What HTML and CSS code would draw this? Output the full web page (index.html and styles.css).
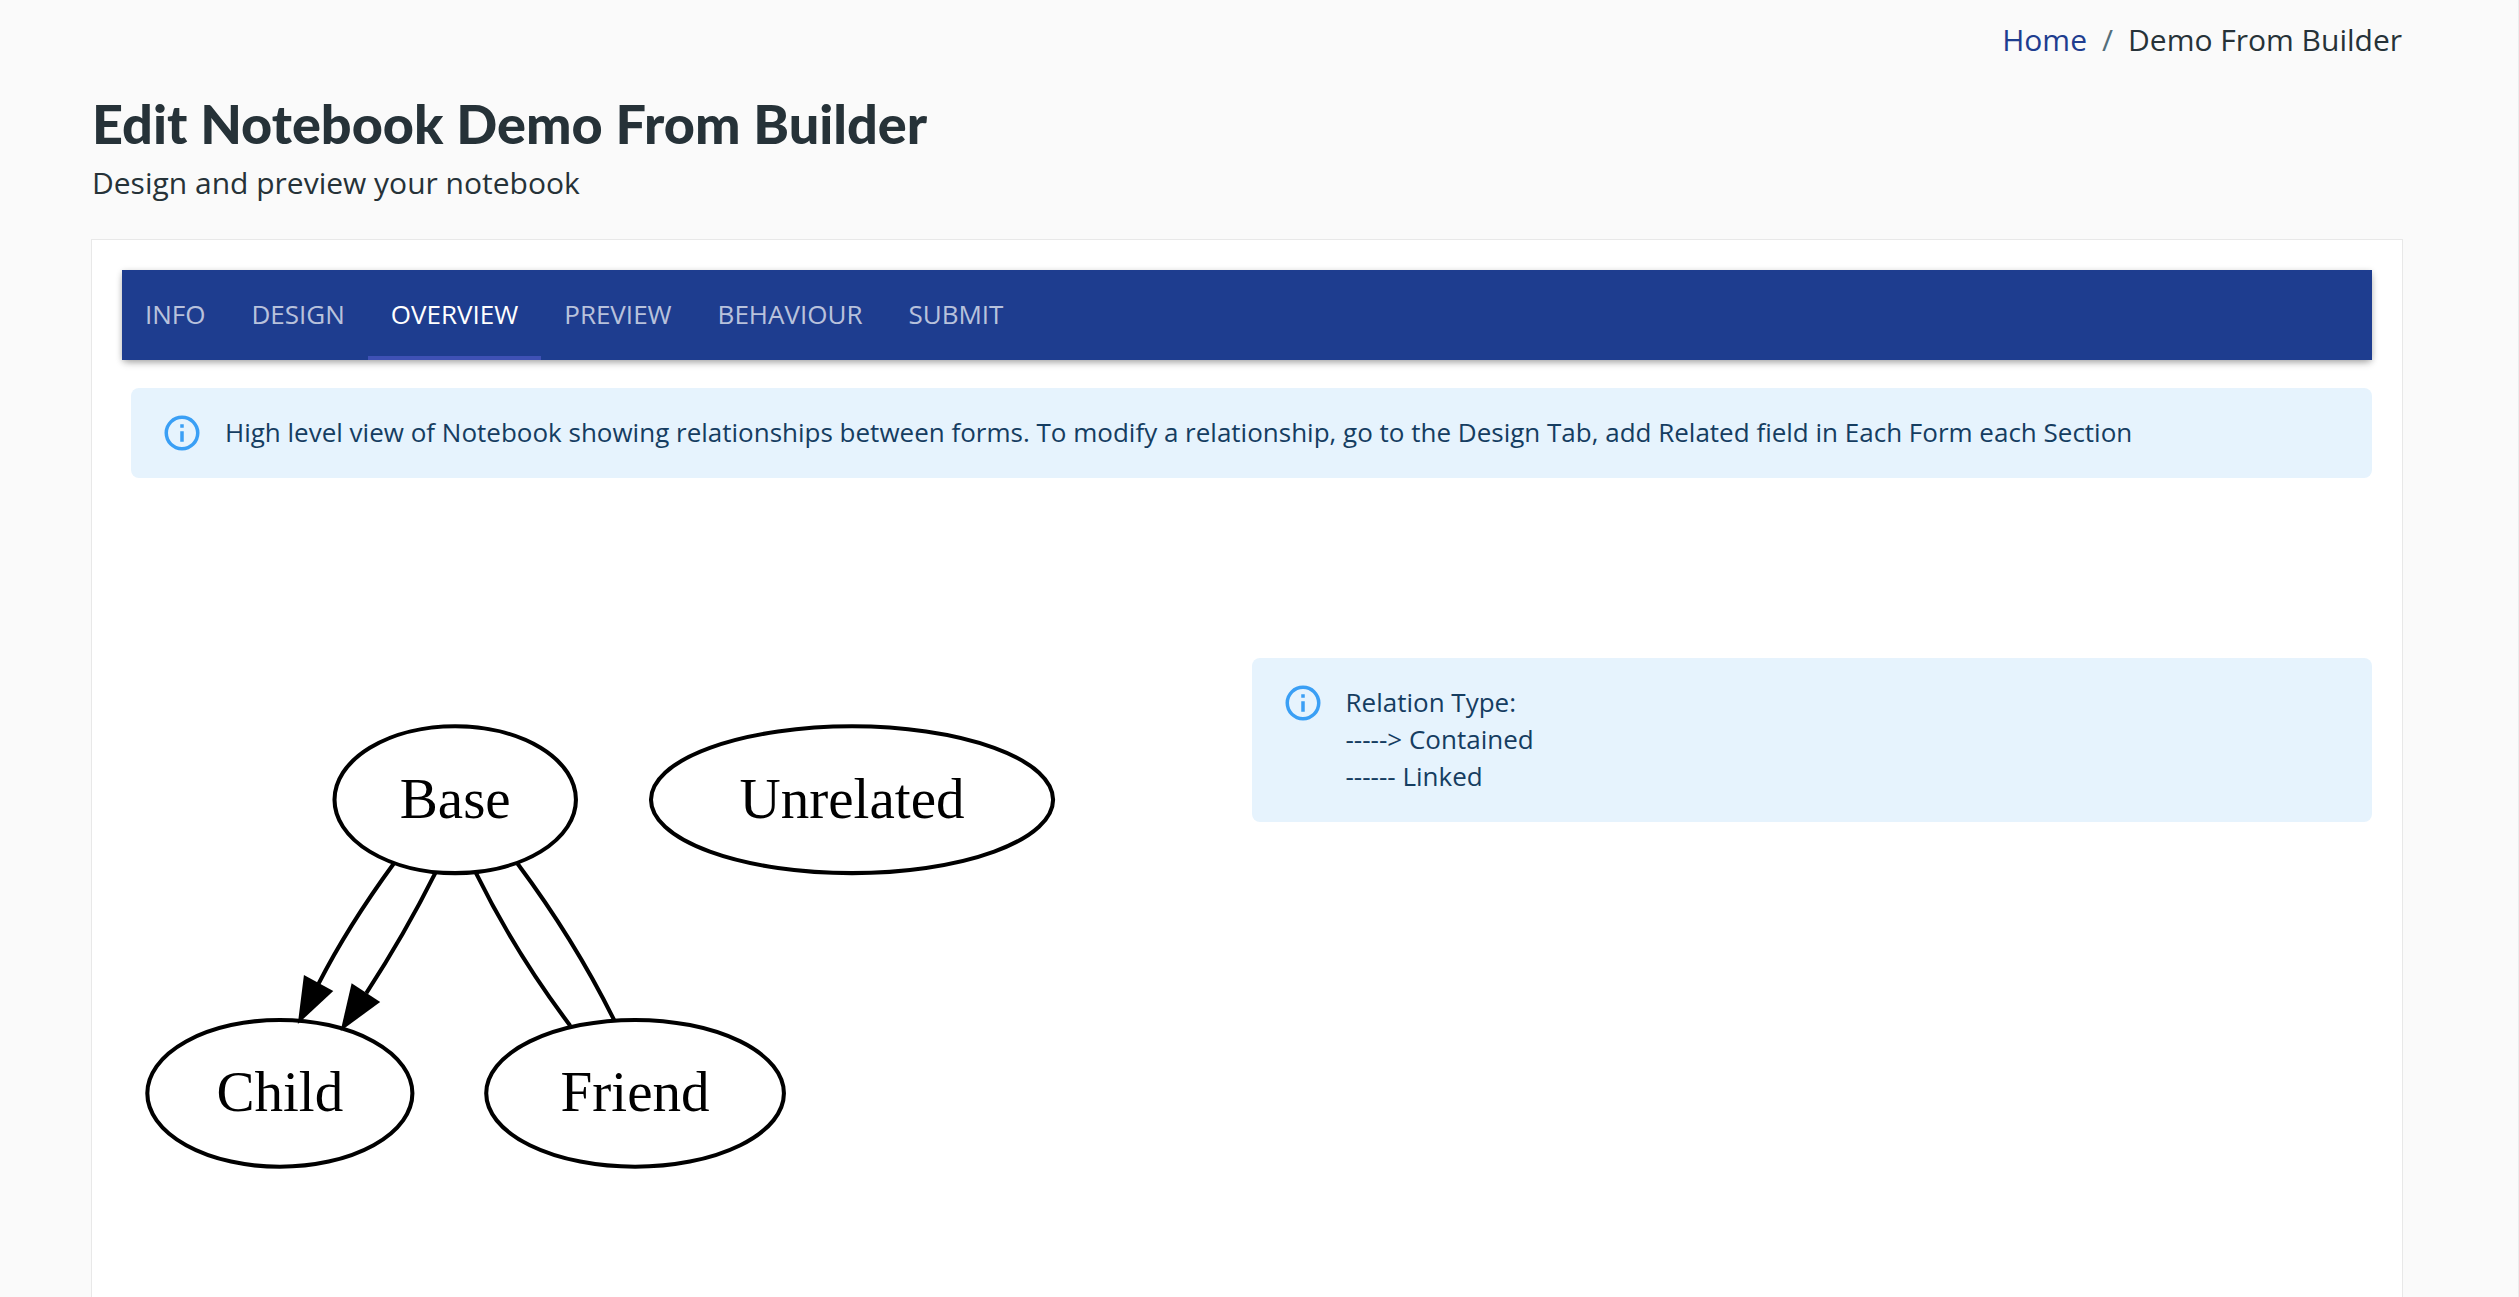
FILE: index.html
```html
<!DOCTYPE html>
<html lang="en">
<head>
  <meta charset="UTF-8" />
  <meta name="viewport" content="width=device-width, initial-scale=1.0"/>
  <title>Edit Notebook Demo From Builder</title>
  <link rel="stylesheet" href="styles.css">
</head>
<body>
  <main class="page">
    <nav class="breadcrumbs" aria-label="breadcrumb">
      <a href="#">Home</a>
      <span class="separator">/</span>
      <span>Demo From Builder</span>
    </nav>

    <header class="heading">
      <h1>Edit Notebook Demo From Builder</h1>
      <p>Design and preview your notebook</p>
    </header>

    <section class="card">
      <div class="tabs" role="tablist">
        <button class="tab" role="tab">INFO</button>
        <button class="tab" role="tab">DESIGN</button>
        <button class="tab active" role="tab" aria-selected="true">OVERVIEW</button>
        <button class="tab" role="tab">PREVIEW</button>
        <button class="tab" role="tab">BEHAVIOUR</button>
        <button class="tab" role="tab">SUBMIT</button>
      </div>

      <div class="panel">
        <div class="alert">
          <svg class="alert-icon" viewBox="0 0 24 24" aria-hidden="true">
            <path d="M11,7H13V9H11V7M11,11H13V17H11V11M12,2A10,10 0 0,0 2,12A10,10 0 0,0 12,22A10,10 0 0,0 22,12A10,10 0 0,0 12,2M12,20C7.59,20 4,16.41 4,12C4,7.59 7.59,4 12,4C16.41,4 20,7.59 20,12C20,16.41 16.41,20 12,20Z"/>
          </svg>
          <div>High level view of Notebook showing relationships between forms. To modify a relationship, go to the Design Tab, add Related field in Each Form each Section</div>
        </div>

        <div class="columns">
          <div class="graph">
            <svg viewBox="0 0 230 116" role="img" aria-label="Form relationships">
              <g transform="translate(4 112)">
                <!-- nodes -->
                <g class="node">
                  <ellipse cx="75.5" cy="-90" rx="29.6" ry="18"/>
                  <text x="75.5" y="-85.6">Base</text>
                </g>
                <g class="node">
                  <ellipse cx="32.5" cy="-18" rx="32.5" ry="18"/>
                  <text x="32.5" y="-13.6">Child</text>
                </g>
                <g class="node">
                  <ellipse cx="119.6" cy="-18" rx="36.5" ry="18"/>
                  <text x="119.6" y="-13.6">Friend</text>
                </g>
                <g class="node">
                  <ellipse cx="172.8" cy="-90" rx="49.3" ry="18"/>
                  <text x="172.8" y="-85.6">Unrelated</text>
                </g>
                <!-- contained -->
                <g class="edge">
                  <path d="M60.4,-74.3Q49.2,-59 42,-44.9"/>
                  <polygon points="45.6,-43.1 36.9,-35 38.4,-47"/>
                </g>
                <g class="edge">
                  <path d="M70.6,-72Q63.1,-57 53.7,-42.6"/>
                  <polygon points="57.1,-40.4 47.4,-33.3 50.1,-45"/>
                </g>
                <!-- linked -->
                <g class="edge">
                  <path d="M80.6,-72Q90.3,-52.3 103.7,-34.6"/>
                </g>
                <g class="edge">
                  <path d="M90.8,-74.3Q104.8,-55.5 114.5,-35.9"/>
                </g>
              </g>
            </svg>
          </div>

          <div class="legend">
            <div class="alert">
              <svg class="alert-icon" viewBox="0 0 24 24" aria-hidden="true">
                <path d="M11,7H13V9H11V7M11,11H13V17H11V11M12,2A10,10 0 0,0 2,12A10,10 0 0,0 12,22A10,10 0 0,0 22,12A10,10 0 0,0 12,2M12,20C7.59,20 4,16.41 4,12C4,7.59 7.59,4 12,4C16.41,4 20,7.59 20,12C20,16.41 16.41,20 12,20Z"/>
              </svg>
              <div>Relation Type:<br>-----&gt; Contained<br>------ Linked</div>
            </div>
          </div>
        </div>
      </div>
    </section>
  </main>
</body>
</html>
```

FILE: styles.css
```css
* {
  box-sizing: border-box;
}

body {
  margin: 0;
  background: #fafafa;
  color: #263238;
  font-family: "Open Sans", sans-serif;
  font-size: 30px;
  line-height: 45px;
}

.page {
  display: flex;
  flex-direction: column;
  min-height: 100vh;
  padding: 17px 115px 0 91px;
  border-right: 1px solid #ececec;
}

.breadcrumbs {
  display: flex;
  justify-content: flex-end;
  gap: 15px;
  padding-right: 1px;
}

.breadcrumbs a {
  color: #1e3d8f;
  text-decoration: none;
}

.separator {
  color: #546e7a;
}

.heading {
  padding: 28px 1px 34px;
}

h1 {
  margin: 0 0 2px;
  font-family: Lato, sans-serif;
  font-size: 54px;
  font-weight: 900;
  line-height: 68px;
}

.heading p {
  margin: 0;
}

.card {
  flex: 1;
  padding: 30px;
  background: #fff;
  border: 1px solid #e8e8e8;
  border-bottom: none;
}

.tabs {
  display: flex;
  background: #1e3d8f;
  box-shadow: 0 4px 8px -2px rgba(0, 0, 0, 0.3), 0 1px 6px rgba(0, 0, 0, 0.15);
}

.tab {
  height: 90px;
  padding: 2px 23px 0;
  border: none;
  border-bottom: 4px solid transparent;
  background: none;
  color: rgba(255, 255, 255, 0.7);
  font-family: inherit;
  font-size: 26px;
  cursor: pointer;
}

.tab.active {
  color: #fff;
  border-bottom-color: #3f51b5;
}

.panel {
  padding: 28px 0 0 9px;
}

.alert {
  display: flex;
  padding: 26px 30px 27px;
  border-radius: 8px;
  background: #e6f3fd;
  color: #153d61;
  font-size: 26px;
  line-height: 37px;
}

.alert-icon {
  flex: none;
  width: 42px;
  height: 42px;
  margin: -2px 22px -3px 0;
  fill: #3a9ff5;
}

.columns {
  display: grid;
  grid-template-columns: 1fr 1fr;
  padding-top: 180px;
}

.graph {
  padding-top: 52px;
}

.graph svg {
  display: block;
  width: 100%;
  max-width: 938px;
}

.node ellipse,
.edge path {
  fill: none;
  stroke: #000;
}

.node text {
  font-family: "Liberation Serif", serif;
  font-size: 14px;
  text-anchor: middle;
  fill: #000;
}

.edge polygon {
  fill: #000;
}
```
